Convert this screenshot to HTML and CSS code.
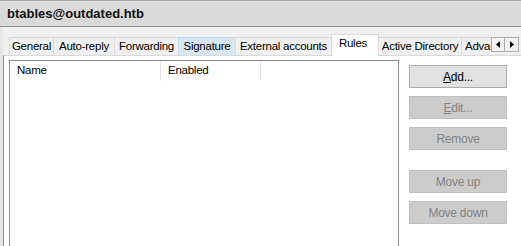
FILE: index.html
```html
<!DOCTYPE html>
<html>
<head>
<meta charset="utf-8">
<link rel="stylesheet" href="styles.css">
</head>
<body>
<div class="title">btables@outdated.htb</div>
<div class="main">
  <div class="tabs">
    <div class="tab w-gen">General</div>
    <div class="tab w-auto">Auto-reply</div>
    <div class="tab w-fwd">Forwarding</div>
    <div class="tab w-sig hover">Signature</div>
    <div class="tab w-ext">External accounts</div>
    <div class="tab w-rules active">Rules</div>
    <div class="tab w-ad">Active Directory</div>
    <div class="tab cut">Advanced</div>
    <div class="scroller">
      <div class="arrow"><svg width="4" height="7" viewBox="0 0 4 7"><path d="M4 0 L0 3.5 L4 7Z" fill="#000"/></svg></div>
      <div class="arrow"><svg width="4" height="7" viewBox="0 0 4 7"><path d="M0 0 L4 3.5 L0 7Z" fill="#000"/></svg></div>
    </div>
  </div>
  <div class="panel">
    <div class="list">
      <div class="lhead">
        <div class="col c1">Name</div>
        <div class="col c2">Enabled</div>
      </div>
    </div>
    <div class="buttons">
      <div class="btn"><u>A</u>dd...</div>
      <div class="btn dis"><u>E</u>dit...</div>
      <div class="btn dis">Remove</div>
      <div class="btn dis sep">Move up</div>
      <div class="btn dis">Move down</div>
    </div>
  </div>
</div>
</body>
</html>
```
FILE: styles.css
```css
* { box-sizing: border-box; }
html, body { margin: 0; padding: 0; height: 100%; }
body {
  background: #f0f0f0;
  font-family: "Liberation Sans", Arial, sans-serif;
  font-size: 11.5px;
  letter-spacing: -0.25px;
  color: #000;
  overflow: hidden;
  display: flex;
  flex-direction: column;
}
.title {
  height: 27px;
  background: #dadada;
  border-top: 1px solid #a8a8a8;
  border-bottom: 1px solid #8c8c8c;
  font-weight: bold;
  font-size: 13px;
  letter-spacing: 0;
  padding: 5px 0 0 7px;
  color: #111;
  flex: none;
}
.main {
  flex: 1;
  display: flex;
  flex-direction: column;
  padding: 10px 0 0 3px;
  background: linear-gradient(to right, #e6e6e6 0 3px, #f0f0f0 3px);
}
.tabs {
  display: flex;
  height: 18px;
  align-items: flex-end;
  padding-left: 6px;
  position: relative;
  z-index: 1;
  flex: none;
}
.tab {
  height: 18px;
  padding-top: 2px;
  text-align: center;
  border: 1px solid #d9d9d9;
  border-right: none;
  border-bottom: none;
  background: #f0f0f0;
  white-space: nowrap;
  color: #000;
  flex: none;
}
.w-gen { width: 44px; }
.w-auto { width: 61px; }
.w-fwd { width: 64px; }
.w-sig { width: 57px; }
.w-ext { width: 96px; }
.w-rules { width: 48px; }
.w-ad { width: 82px; }
.tab.hover { background: #d8e6f2; border-color: #c5d9ee; }
.tab.active {
  height: 22px;
  background: #fff;
  margin-bottom: -1px;
  padding-top: 2px;
  padding-right: 4px;
  border-right: 1px solid #d9d9d9;
}
.tab.active + .tab { border-left: none; }
.tab.cut { width: 30px; overflow: hidden; text-align: left; padding-left: 3px; }
.scroller { display: flex; height: 16px; align-self: flex-start; flex: none; }
.arrow {
  width: 14px; height: 15px;
  border: 1px solid #adadad;
  background: #f3f3f3;
  display: flex; align-items: center; justify-content: center;
}
.arrow + .arrow { border-left: none; }
.panel {
  flex: 1;
  background: #fff;
  border-left: 1px solid #8e8e8e;
  border-top: 1px solid #d9d9d9;
  display: flex;
  padding: 4px 0 0 5px;
}
.list {
  width: 390px;
  border: 1px solid #828790;
  border-bottom: none;
  background: #fff;
  flex: none;
}
.lhead { display: flex; height: 22px; }
.col { padding: 3px 0 0 7px; border-right: 1px solid #e5e5e5; height: 20px; }
.c1 { width: 151px; }
.c2 { width: 100px; }
.buttons {
  display: flex;
  flex-direction: column;
  gap: 8px;
  margin-left: 10px;
  padding-top: 5px;
}
.btn {
  width: 98px;
  height: 23px;
  border: 1px solid #adadad;
  background: #e1e1e1;
  display: flex;
  align-items: center;
  justify-content: center;
  color: #000;
  font-size: 12px;
}
.btn.dis { background: #cccccc; border-color: #bfbfbf; color: #838383; }
.btn.sep { margin-top: 12px; }
.btn u { text-decoration: underline; }
```
